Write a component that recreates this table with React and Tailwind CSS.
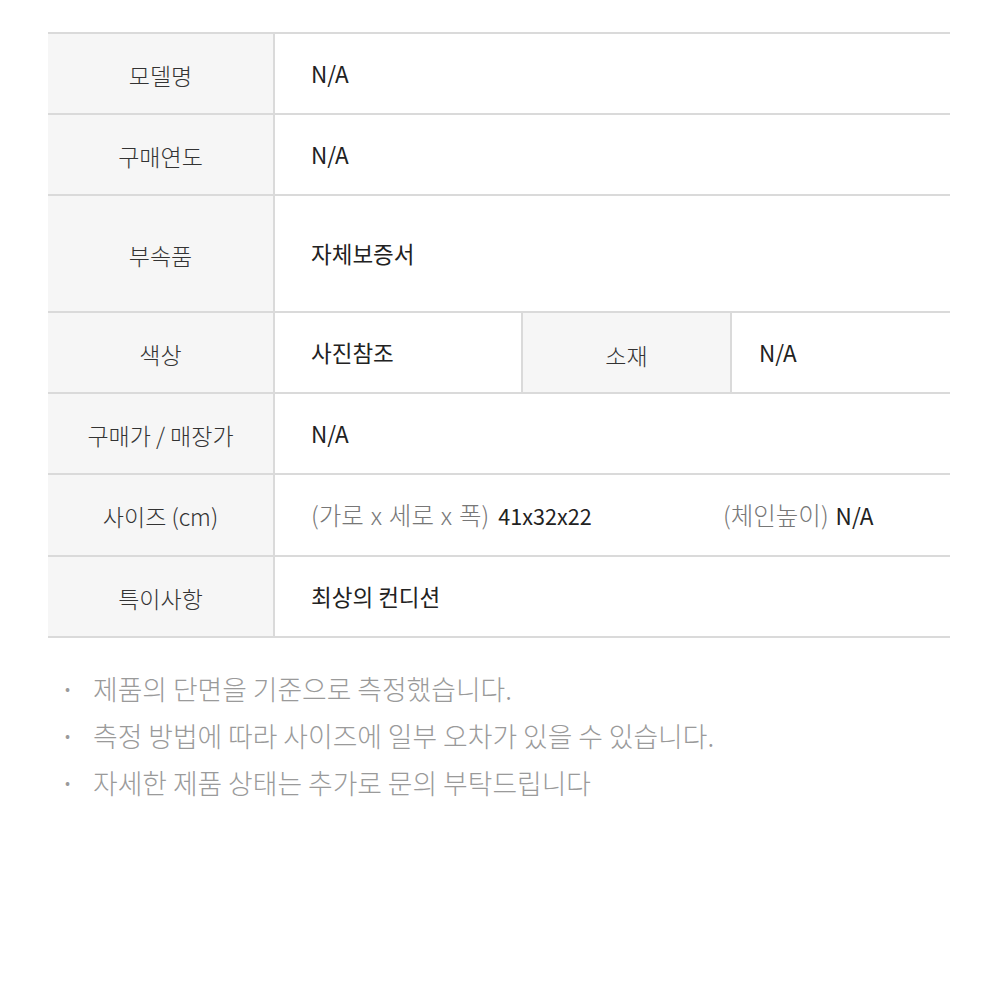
import React from "react";

const font = { fontFamily: '"Noto Sans CJK KR", "Noto Sans", sans-serif' };

function Label({ children, className = "" }) {
  return (
    <div className={"flex items-center justify-center bg-[#f6f6f6] pt-[3px] text-[23px] font-light text-[#333] " + className}>
      {children}
    </div>
  );
}

function Value({ children, className = "" }) {
  return (
    <div className={"flex items-center pl-[36px] pt-[1px] text-[22.5px] text-[#222] " + className}>
      {children}
    </div>
  );
}

function Row({ h, children }) {
  return (
    <div className={"grid grid-cols-[227px_1fr] border-b-2 border-[#dadada] " + h}>
      {children}
    </div>
  );
}

export default function App() {
  return (
    <div className="min-h-[1000px] w-[1000px] bg-white pt-[32px]" style={font}>
      <div className="ml-[48px] mr-[50px] border-t-2 border-[#dadada]">
        <Row h="h-[81px]">
          <Label className="border-r-2 border-[#dadada]">모델명</Label>
          <Value>N/A</Value>
        </Row>
        <Row h="h-[81px]">
          <Label className="border-r-2 border-[#dadada]">구매연도</Label>
          <Value>N/A</Value>
        </Row>
        <Row h="h-[117px]">
          <Label className="border-r-2 border-[#dadada]">부속품</Label>
          <Value>자체보증서</Value>
        </Row>
        <div className="grid h-[81px] grid-cols-[227px_248px_209px_1fr] border-b-2 border-[#dadada]">
          <Label className="border-r-2 border-[#dadada]">색상</Label>
          <Value className="border-r-2 border-[#dadada]">사진참조</Value>
          <Label className="border-r-2 border-[#dadada] pt-[6px]">소재</Label>
          <div className="flex items-center pl-[27px] pt-[1px] text-[22.5px] text-[#222]">N/A</div>
        </div>
        <Row h="h-[81px]">
          <Label className="border-r-2 border-[#dadada]">구매가 / 매장가</Label>
          <Value>N/A</Value>
        </Row>
        <Row h="h-[82px]">
          <Label className="border-r-2 border-[#dadada]">사이즈 (cm)</Label>
          <Value>
            <span className="flex w-[412px] items-baseline">
              <span className="mr-[9px] text-[24.5px] font-light text-[#777] [word-spacing:0.06em]">(가로 x 세로 x 폭)</span>
              <span className="text-[21.6px]">41x32x22</span>
            </span>
            <span className="flex items-baseline">
              <span className="mr-[7px] text-[24.5px] font-light text-[#777]">(체인높이)</span>
              <span>N/A</span>
            </span>
          </Value>
        </Row>
        <Row h="h-[81px]">
          <Label className="border-r-2 border-[#dadada]">특이사항</Label>
          <Value>최상의 컨디션</Value>
        </Row>
      </div>
      <ul className="mt-[32px] ml-[65px] flex flex-col gap-[10px] text-[26.8px] font-light leading-[37px] text-[#9a9a9a]">
        <li className="flex items-center">
          <span className="w-[28px] text-[16px]">•</span>
          <span>제품의 단면을 기준으로 측정했습니다.</span>
        </li>
        <li className="flex items-center">
          <span className="w-[28px] text-[16px]">•</span>
          <span>측정 방법에 따라 사이즈에 일부 오차가 있을 수 있습니다.</span>
        </li>
        <li className="flex items-center">
          <span className="w-[28px] text-[16px]">•</span>
          <span>자세한 제품 상태는 추가로 문의 부탁드립니다</span>
        </li>
      </ul>
    </div>
  );
}
